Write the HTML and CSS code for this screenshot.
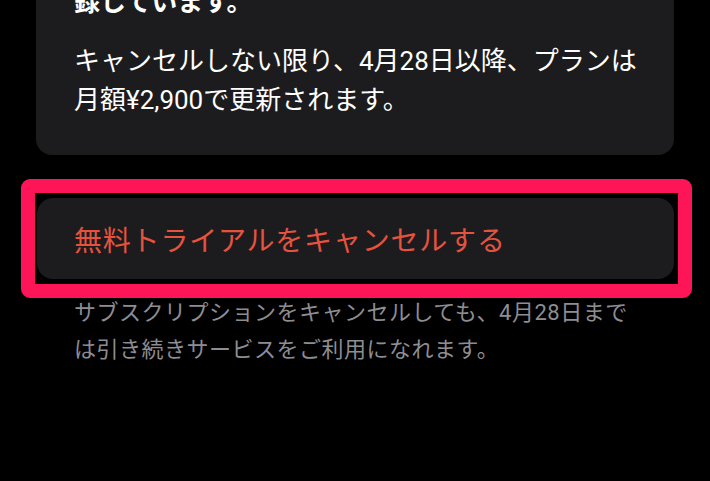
FILE: index.html
```html
<!DOCTYPE html>
<html lang="ja">
<head>
  <meta charset="UTF-8">
  <meta name="viewport" content="width=device-width, initial-scale=1.0">
  <title>サブスクリプション</title>
  <link rel="stylesheet" href="styles.css">
</head>
<body>

<div class="info-card">
  <p class="info-lead">録しています。</p>
  <p class="info-text">キャンセルしない限り、4月28日以降、プランは<br>月額¥2,900で更新されます。</p>
</div>

<!-- highlighted cancel action -->
<div class="highlight">
  <button class="cancel-button">無料トライアルをキャンセルする</button>
</div>

<p class="footnote">サブスクリプションをキャンセルしても、4月28日まで<br>は引き続きサービスをご利用になれます。</p>

</body>
</html>
```

FILE: styles.css
```css
body {
  margin: 0;
  padding: 0;
  background: #000000;
  font-family: Roboto, "Noto Sans CJK JP", sans-serif;
  overflow: hidden;
}

.info-card {
  margin: -39px 36px 0 36px;
  padding: 22px 20px 35px 38px;
  background-color: #1c1c1e;
  border-radius: 16px;
  color: #ffffff;
}

.info-card p {
  margin: 0;
  font-size: 26px;
  line-height: 39px;
  white-space: nowrap;
}

.info-lead {
  font-weight: bold;
  margin-bottom: 20px !important;
}

.highlight {
  margin: 24px 0 0 21px;
  padding: 5px 4px 5px 2px;
  box-sizing: content-box;
  border: 14px solid #fe1558;
  border-radius: 9px;
  width: 637px;
}

.cancel-button {
  display: block;
  width: 100%;
  height: 81px;
  padding: 0 0 0 37px;
  background-color: #1c1c1e;
  border: none;
  border-radius: 16px;
  color: #e5533f;
  font-family: Roboto, "Noto Sans CJK JP", sans-serif;
  font-size: 28px;
  letter-spacing: 0.8px;
  text-align: left;
  cursor: pointer;
}

.footnote {
  margin: -4px 60px 0 74px;
  color: #8d8d92;
  font-size: 22px;
  letter-spacing: 0.5px;
  line-height: 37px;
  white-space: nowrap;
}
```
